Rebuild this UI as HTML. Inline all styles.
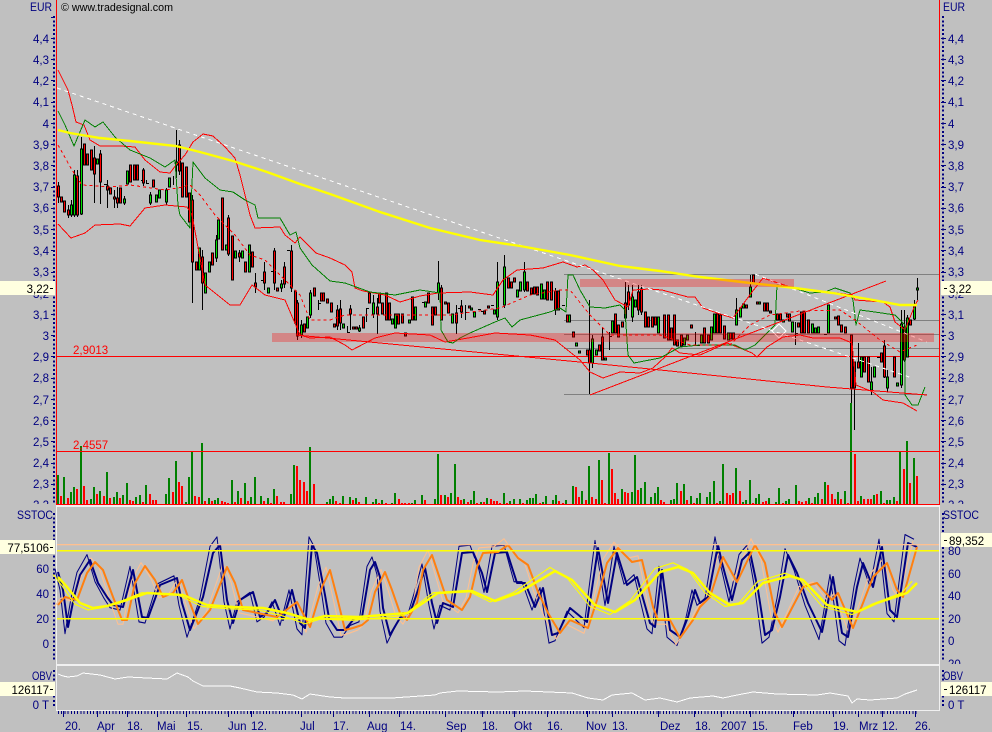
<!DOCTYPE html>
<html><head><meta charset="utf-8"><title>Chart</title>
<style>
html,body{margin:0;padding:0;background:#c0c0c0}
svg{display:block}
text{font-family:"Liberation Sans",sans-serif;font-size:11.5px;fill:#000080}
.r{text-anchor:end}
.k{fill:#000}
.rd{fill:#f00}
</style></head><body>
<svg width="992" height="732" viewBox="0 0 992 732" xmlns="http://www.w3.org/2000/svg">
<defs>
<clipPath id="cv"><rect x="0" y="0" width="992" height="504"/></clipPath>
<clipPath id="cs"><rect x="0" y="505" width="992" height="159"/></clipPath>
<path id="nv" fill="none" d="M58 572L63 590L68 627L74 597L80 575L90 560L98 583L107 597L113 605L123 607L133 570L142 617L148 618L160 585L177 578L182 603L190 630L203 597L213 553L220 545L227 600L233 623L240 600L253 592L260 617L267 613L275 600L283 620L292 590L300 623L305 628L312 545L317 553L325 595L329 618L337 630L345 630L353 620L362 617L370 570L375 562L380 577L383 608L390 635L397 623L403 613L410 613L417 593L425 568L432 603L437 623L443 603L453 607L462 553L473 552L482 573L487 592L495 553L507 552L517 583L525 583L535 607L543 588L552 635L558 633L570 608L587 622L598 548L608 603L617 553L627 585L637 577L650 623L655 627L662 570L670 630L680 637L688 617L695 590L700 603L708 597L718 545L722 563L732 600L742 560L750 552L758 590L765 635L772 630L780 597L788 555L797 573L808 603L822 632L833 577L842 633L848 637L857 587L863 563L873 587L882 547L890 610L897 617L908 543L917 547"/>
<path id="or" fill="none" d="M58 605L65 597L77 600L87 573L95 562L103 570L113 597L122 620L127 620L135 583L145 566L155 580L163 597L173 593L182 580L190 603L198 624L210 610L227 567L235 583L243 610L253 612L267 615L277 617L297 602L310 627L322 587L330 570L337 597L345 630L353 628L362 625L368 620L375 592L385 572L392 590L400 613L407 620L417 603L423 570L432 555L438 573L447 600L462 610L470 597L477 567L483 553L498 552L508 545L518 558L528 565L538 592L548 613L560 633L570 620L588 628L597 600L607 563L618 548L632 562L642 560L653 607L658 620L670 620L680 638L693 620L700 607L710 597L723 557L737 582L755 545L765 563L775 613L782 627L803 587L817 583L832 600L838 593L853 628L863 603L873 577L887 563L897 590L903 597L917 547"/>
<path id="yl" fill="none" d="M58 577L67 587L80 603L93 608L107 606L127 600L147 593L183 595L207 605L233 607L263 608L287 613L310 620L325 616L358 617L408 613L438 593L472 591L495 601L518 593L555 571L572 580L595 605L615 612L635 600L660 572L678 567L693 573L710 593L730 605L743 603L763 583L790 576L803 580L827 605L857 612L877 603L907 593L917 583"/>
</defs>

<rect width="992" height="732" fill="#c0c0c0"/>

<!-- volume -->
<g clip-path="url(#cv)" shape-rendering="crispEdges">
<path stroke="#008000" stroke-width="2.2" fill="none" d="M58 504V475M64 504V477M71 504V492M74 504V487M81 504V446M91 504V499M94 504V487M100 504V491M107 504V472M114 504V497M117 504V492M123 504V495M127 504V483M136 504V497M140 504V495M146 504V485M166 504V494M169 504V478M176 504V461M186 504V502M189 504V477M192 504V452M202 504V443M209 504V498M215 504V500M218 504V498M232 504V480M238 504V491M245 504V483M251 504V497M255 504V477M261 504V496M268 504V498M274 504V489M291 504V494M294 504V465M310 504V447M327 504V502M330 504V499M333 504V496M343 504V496M350 504V497M356 504V498M366 504V497M373 504V502M376 504V499M382 504V500M392 504V503M395 504V493M412 504V503M415 504V500M422 504V495M435 504V499M438 504V454M445 504V495M451 504V493M455 504V464M464 504V499M471 504V500M474 504V491M481 504V502M487 504V498M504 504V493M510 504V501M514 504V499M520 504V499M527 504V500M530 504V498M533 504V498M536 504V494M543 504V502M546 504V496M553 504V500M556 504V495M566 504V500M573 504V486M582 504V491M589 504V466M599 504V460M609 504V453M622 504V489M632 504V492M635 504V455M641 504V488M645 504V482M651 504V497M655 504V493M658 504V487M671 504V500M674 504V499M677 504V483M684 504V484M691 504V496M697 504V498M700 504V493M707 504V497M710 504V492M714 504V481M720 504V501M723 504V464M736 504V468M743 504V502M746 504V500M750 504V480M756 504V498M759 504V494M769 504V498M776 504V502M779 504V488M786 504V501M789 504V499M796 504V485M809 504V498M815 504V497M818 504V493M825 504V482M838 504V492M845 504V491M851 504V403M861 504V496M874 504V495M881 504V491M887 504V500M890 504V500M894 504V497M900 504V452M907 504V441M914 504V458"/>
<path stroke="#f00" stroke-width="2.2" fill="none" d="M61 504V496M68 504V498M77 504V489M84 504V486M87 504V500M97 504V494M104 504V496M110 504V498M120 504V498M130 504V500M133 504V501M143 504V502M150 504V494M153 504V500M156 504V500M173 504V492M179 504V482M182 504V486M195 504V496M199 504V497M205 504V501M212 504V501M222 504V501M225 504V502M228 504V503M235 504V502M241 504V498M248 504V501M264 504V501M271 504V503M277 504V496M281 504V502M284 504V502M297 504V466M300 504V480M304 504V482M307 504V491M314 504V484M336 504V501M340 504V503M353 504V500M359 504V502M379 504V503M386 504V503M399 504V499M402 504V503M405 504V503M409 504V503M425 504V500M441 504V495M448 504V497M458 504V497M461 504V500M468 504V502M477 504V503M484 504V502M491 504V499M494 504V501M497 504V501M500 504V503M507 504V503M523 504V503M540 504V503M559 504V501M563 504V503M576 504V487M579 504V497M586 504V500M592 504V497M596 504V499M602 504V480M605 504V503M612 504V469M615 504V493M618 504V499M625 504V492M628 504V493M638 504V490M661 504V500M664 504V502M681 504V491M687 504V500M694 504V503M717 504V503M727 504V493M730 504V495M733 504V493M740 504V491M753 504V503M763 504V502M766 504V501M783 504V503M799 504V501M802 504V502M806 504V501M812 504V503M822 504V499M828 504V485M832 504V494M835 504V499M841 504V499M848 504V503M855 504V454M858 504V501M864 504V499M868 504V499M871 504V499M877 504V494M884 504V503M897 504V501M904 504V469M910 504V483M917 504V476"/>
</g>

<!-- horizontal lines main -->
<g shape-rendering="crispEdges" fill="none">
<path stroke="#808080" d="M564 274.5H939M564 320.5H939M564 334.5H939M564 348.5H939M564 394.5H927"/>
<path stroke="#f00" d="M57 356.5H939M57 451.5H939"/>
</g>

<!-- candles -->
<g shape-rendering="crispEdges">
<path fill="none" stroke="#000" d="M58.5 182V203M68.5 205V218M71.5 200V217M74.5 170V217M77.5 170V217M81.5 137V215M94.5 146V203M100.5 150V204M107.5 180V208M114.5 190V208M117.5 187V208M124.5 196V205M143.5 168V186M146.5 180V184M150.5 192V205M166.5 188V205M173.5 176V185M176.5 130V178M179.5 140V175M192.5 195V303M202.5 250V310M216.5 235V262M228.5 215V256M239.5 250V262M255.5 273V293M264.5 262V290M274.5 248V290M281.5 280V292M284.5 262V288M291.5 245V292M297.5 300V340M301.5 320V338M310.5 290V318M318.5 300V310M337.5 305V330M340.5 300V330M347.5 326V332M350.5 305V330M359.5 325V332M366.5 308V322M373.5 295V318M377.5 298V334M438.5 261V300M441.5 285V320M456.5 305V334M461.5 300V318M465.5 305V320M497.5 262V320M504.5 255V308M524.5 262V292M555.5 288V315M589.5 300V394M592.5 335V368M602.5 328V360M609.5 332V350M625.5 282V322M628.5 285V310M632.5 285V322M638.5 285V315M641.5 285V315M695.5 332V345M736.5 298V325M750.5 275V297M795.5 322V345M851.5 335V403M854.5 362V430M858.5 343V368M871.5 367V395M884.5 340V378M887.5 370V392M901.5 310V388M904.5 310V362M907.5 315V357M914.5 300V320M917.5 278V300M104 184.5h3M141 180.5h3M146 183.5h3M261 280.5h3M271 271.5h3M287 250.5h3M318 303.5h3M347 332.5h3M366 308.5h3M422 302.5h3M458 308.5h3M465 312.5h3M478 309.5h3M481 311.5h3M491 305.5h3M562 305.5h3M609 336.5h3M694 345.5h3M697 345.5h3M795 333.5h3M824 334.5h3M877 357.5h3"/>
<path fill="#f00" stroke="#000" d="M57.5 186h2v11h-2zM60.5 197h2v5h-2zM63.5 201h2v11h-2zM67.5 210h2v5h-2zM76.5 176h2v39h-2zM83.5 144h2v21h-2zM86.5 154h2v11h-2zM90.5 150h2v20h-2zM93.5 158h2v16h-2zM99.5 154h2v28h-2zM106.5 186h2v4h-2zM109.5 188h2v6h-2zM113.5 197h2v2h-2zM116.5 198h2v5h-2zM119.5 188h2v15h-2zM129.5 165h2v17h-2zM133.5 165h2v15h-2zM136.5 165h2v15h-2zM142.5 170h2v13h-2zM152.5 180h2v7h-2zM178.5 145h2v26h-2zM181.5 163h2v34h-2zM185.5 167h2v30h-2zM188.5 193h2v29h-2zM191.5 200h2v62h-2zM195.5 262h2v8h-2zM201.5 257h2v26h-2zM211.5 253h2v12h-2zM221.5 198h2v52h-2zM227.5 218h2v36h-2zM231.5 236h2v44h-2zM238.5 253h2v4h-2zM244.5 262h2v10h-2zM251.5 252h2v15h-2zM254.5 283h2v4h-2zM263.5 272h2v11h-2zM273.5 251h2v32h-2zM276.5 288h2v3h-2zM283.5 267h2v17h-2zM290.5 251h2v37h-2zM294.5 291h2v32h-2zM296.5 303h2v33h-2zM303.5 324h2v8h-2zM313.5 288h2v8h-2zM320.5 293h2v8h-2zM322.5 293h2v8h-2zM326.5 299h2v4h-2zM330.5 303h2v9h-2zM333.5 324h2v3h-2zM336.5 310h2v16h-2zM339.5 309h2v14h-2zM349.5 309h2v5h-2zM352.5 327h2v2h-2zM355.5 327h2v2h-2zM362.5 317h2v11h-2zM368.5 293h2v10h-2zM376.5 307h2v7h-2zM378.5 293h2v10h-2zM381.5 303h2v11h-2zM385.5 293h2v27h-2zM388.5 303h2v17h-2zM397.5 314h2v10h-2zM401.5 314h2v9h-2zM404.5 333h2v3h-2zM411.5 297h2v23h-2zM427.5 293h2v10h-2zM431.5 307h2v18h-2zM434.5 307h2v8h-2zM440.5 288h2v32h-2zM444.5 302h2v2h-2zM447.5 303h2v10h-2zM455.5 313h2v10h-2zM460.5 306h2v6h-2zM468.5 306h2v2h-2zM483.5 311h2v3h-2zM487.5 306h2v2h-2zM507.5 278h2v10h-2zM510.5 282h2v6h-2zM513.5 278h2v4h-2zM526.5 282h2v9h-2zM530.5 288h2v6h-2zM533.5 287h2v7h-2zM536.5 287h2v8h-2zM546.5 282h2v18h-2zM550.5 282h2v18h-2zM554.5 291h2v19h-2zM557.5 291h2v19h-2zM566.5 315h2v7h-2zM572.5 332h2v5h-2zM586.5 350h2v5h-2zM588.5 350h2v13h-2zM598.5 345h2v6h-2zM601.5 337h2v23h-2zM614.5 314h2v19h-2zM617.5 325h2v12h-2zM621.5 322h2v5h-2zM624.5 303h2v15h-2zM627.5 292h2v13h-2zM637.5 292h2v18h-2zM640.5 289h2v23h-2zM644.5 312h2v15h-2zM647.5 317h2v10h-2zM651.5 317h2v10h-2zM654.5 317h2v8h-2zM663.5 315h2v23h-2zM667.5 315h2v25h-2zM670.5 328h2v12h-2zM673.5 315h2v30h-2zM676.5 340h2v6h-2zM680.5 335h2v11h-2zM690.5 325h2v3h-2zM703.5 328h2v15h-2zM707.5 335h2v8h-2zM716.5 314h2v19h-2zM719.5 315h2v18h-2zM723.5 326h2v13h-2zM729.5 333h2v6h-2zM732.5 333h2v6h-2zM745.5 305h2v3h-2zM752.5 275h2v8h-2zM756.5 302h2v2h-2zM763.5 303h2v8h-2zM766.5 303h2v8h-2zM769.5 311h2v2h-2zM776.5 314h2v6h-2zM779.5 314h2v6h-2zM786.5 314h2v3h-2zM788.5 314h2v7h-2zM797.5 323h2v4h-2zM800.5 312h2v21h-2zM803.5 312h2v21h-2zM807.5 320h2v13h-2zM834.5 317h2v2h-2zM837.5 316h2v9h-2zM840.5 325h2v7h-2zM844.5 327h2v6h-2zM850.5 335h2v53h-2zM853.5 362h2v26h-2zM857.5 362h2v6h-2zM863.5 357h2v15h-2zM867.5 357h2v25h-2zM880.5 353h2v9h-2zM883.5 346h2v31h-2zM893.5 357h2v20h-2zM903.5 327h2v33h-2zM909.5 320h2v5h-2z"/>
<path fill="#00e000" stroke="#000" d="M70.5 205h2v10h-2zM73.5 175h2v40h-2zM80.5 149h2v65h-2zM96.5 159h2v5h-2zM123.5 199h2v4h-2zM126.5 171h2v13h-2zM149.5 195h2v8h-2zM155.5 195h2v7h-2zM158.5 190h2v8h-2zM165.5 190h2v12h-2zM168.5 178h2v9h-2zM175.5 162h2v3h-2zM198.5 248h2v22h-2zM204.5 273h2v20h-2zM208.5 262h2v10h-2zM215.5 240h2v18h-2zM217.5 220h2v19h-2zM225.5 245h2v5h-2zM234.5 251h2v7h-2zM241.5 251h2v7h-2zM248.5 245h2v27h-2zM267.5 288h2v5h-2zM280.5 284h2v4h-2zM300.5 325h2v10h-2zM306.5 317h2v11h-2zM309.5 293h2v22h-2zM342.5 324h2v4h-2zM358.5 328h2v3h-2zM372.5 303h2v11h-2zM391.5 319h2v5h-2zM394.5 314h2v14h-2zM408.5 320h2v3h-2zM414.5 307h2v13h-2zM424.5 302h2v5h-2zM437.5 283h2v10h-2zM451.5 314h2v9h-2zM470.5 308h2v2h-2zM473.5 312h2v5h-2zM493.5 310h2v4h-2zM496.5 282h2v35h-2zM503.5 267h2v38h-2zM516.5 290h2v7h-2zM519.5 282h2v9h-2zM523.5 272h2v18h-2zM540.5 284h2v15h-2zM543.5 290h2v9h-2zM568.5 315h2v7h-2zM575.5 343h2v3h-2zM578.5 351h2v2h-2zM591.5 339h2v24h-2zM595.5 350h2v5h-2zM604.5 358h2v2h-2zM611.5 321h2v12h-2zM631.5 297h2v20h-2zM634.5 300h2v7h-2zM657.5 317h2v16h-2zM683.5 338h2v7h-2zM686.5 335h2v5h-2zM700.5 335h2v8h-2zM710.5 327h2v13h-2zM713.5 314h2v19h-2zM727.5 333h2v7h-2zM735.5 310h2v15h-2zM739.5 308h2v9h-2zM742.5 304h2v4h-2zM749.5 287h2v10h-2zM758.5 302h2v2h-2zM782.5 320h2v2h-2zM791.5 322h2v10h-2zM811.5 324h2v9h-2zM814.5 328h2v5h-2zM817.5 327h2v6h-2zM827.5 305h2v28h-2zM860.5 357h2v20h-2zM870.5 382h2v8h-2zM873.5 367h2v10h-2zM886.5 377h2v11h-2zM896.5 383h2v3h-2zM900.5 324h2v61h-2zM906.5 318h2v39h-2zM913.5 307h2v12h-2zM916.5 288h2v2h-2z"/>
</g>

<!-- overlays main -->
<g fill="none" shape-rendering="crispEdges" stroke-linejoin="round">
<path stroke="#f00" d="M58 70L62 78L68 90L72 105L76 122L84 125L90 140L100 146L120 146L135 147L145 160L160 172L170 173L176 165L185 155L193 142L203 134L213 136L225 147L235 158L240 175L250 215L255 228L280 227L285 235L295 243L300 237L316 253L330 258L345 265L352 272L355 288L363 291L385 295L400 302L420 296L438 293L470 292L493 295L503 280L517 270L543 268L563 262L577 267L585 265L593 270L603 280L615 300L628 307L633 290L650 289L662 290L688 297L695 297L703 308L717 313L733 318L752 292L763 278L793 288L813 290L852 295L855 300L883 302L890 307L895 322L905 330L915 305L918 300"/>
<path stroke="#f00" d="M58 224L71 238L85 233L95 225L120 224L130 226L145 208L165 205L187 207L192 215L205 285L215 293L230 305L240 305L252 285L265 295L285 300L300 335L310 338L330 337L345 345L352 350L375 338L395 333L430 335L445 342L468 338L495 333L530 335L555 340L580 360L590 372L603 378L620 372L640 373L653 368L665 357L672 348L680 353L700 355L727 343L740 348L752 353L757 357L767 347L783 337L800 335L813 338L840 338L852 343L856 385L873 392L883 400L903 403L917 411"/>
<path stroke="#008000" d="M58 111L65 125L74 146L85 120L95 127L103 122L115 137L130 150L150 158L165 167L175 160L178 205L180 215L190 228L193 162L205 178L220 190L233 192L245 200L255 205L258 218L280 218L290 235L296 232L300 248L312 265L330 281L345 283L370 292L395 295L420 290L440 293L441 330L448 342L453 343L460 338L470 333L495 322L505 318L512 327L520 320L550 312L560 308L566 312L568 275L573 275L580 290L590 307L605 308L620 305L625 310L628 355L634 363L660 358L680 347L700 345L720 345L735 345L745 350L755 345L765 335L775 325L777 285L790 287L810 293L825 292L835 288L850 293L853 300L856 325L860 310L875 312L895 315L905 325L905 395L912 405L918 405L920 400L925 387"/>
<path stroke="#f00" stroke-dasharray="3 3" d="M58 145L72 170L82 185L110 187L130 185L165 190L178 188L190 185L200 195L215 215L235 235L250 255L265 260L300 295L310 320L330 320L345 315L400 315L450 315L500 308L530 295L560 290L570 290L590 315L610 335L640 335L660 335L690 345L730 345L750 325L770 315L800 311L840 310L855 320L880 340L900 352L917 345"/>
<path stroke="#f00" d="M296 335L590 363L660 370L827 387L927 395M590 395L886 281"/>
<path stroke="#fff" stroke-dasharray="4 4" d="M57 88L912 378M755 274L927 342"/>
<path stroke="#fff" d="M779 324L786 331L779 338L772 331Z"/>
</g>
<polyline fill="none" stroke="#ffff00" stroke-width="2.4" points="58,130 70,133 100,138 130,141 176,146 200,152 233,161 267,172 300,184 330,194 380,212 430,228 480,240 520,246 570,255 620,266 660,271 700,277 750,283 787,287 833,293 873,300 900,305 917,305"/>
<rect x="272" y="333" width="662" height="9" fill="rgba(255,0,0,.3)"/>
<rect x="580" y="279" width="214" height="8" fill="rgba(255,0,0,.3)"/>

<!-- frames -->
<g shape-rendering="crispEdges" fill="none">
<path stroke="#f00" d="M56.5 0V504M939.5 0V504M56 504.5H940"/>
<path stroke="#f0f0f0" d="M56.5 505V710M939.5 505V710M56 710.5H940"/>
<path stroke="#f0f0f0" stroke-width="2" d="M0 506H992M0 665H992"/>
</g>
<rect x="0" y="505" width="56" height="2" fill="#c0c0c0"/>
<rect x="940" y="505" width="52" height="2" fill="#c0c0c0"/>
<rect x="0" y="664" width="56" height="2" fill="#c0c0c0"/>
<rect x="940" y="664" width="52" height="2" fill="#c0c0c0"/>

<!-- stochastic -->
<g fill="none" stroke-linejoin="round">
<use href="#nv" stroke="#000080" stroke-width="1" transform="translate(-3 0) translate(0 590) scale(1 1.18) translate(0 -590)"/>
<use href="#or" stroke="#ffc090" stroke-width="1" transform="translate(-4 0) translate(0 590) scale(1 1.14) translate(0 -590)"/>
<use href="#nv" stroke="#000080" stroke-width="2"/>
<use href="#or" stroke="#ff8010" stroke-width="2"/>
<rect x="57" y="544" width="882" height="1.3" fill="#ffc090" stroke="none"/>
<use href="#yl" stroke="#ffff00" stroke-width="1" transform="translate(-5 0) translate(0 595) scale(1 1.15) translate(0 -595)"/>
<use href="#yl" stroke="#ffff00" stroke-width="2.5"/>
<rect x="57" y="550" width="882" height="1.5" fill="#ffff00" stroke="none"/>
<rect x="57" y="618" width="882" height="1.5" fill="#ffff00" stroke="none"/>
</g>

<!-- OBV -->
<polyline fill="none" stroke="#fff" shape-rendering="crispEdges" points="58,674 63,676 68,677 77,676 83,673 100,675 115,679 128,677 147,678 167,679 177,673 188,677 193,681 203,686 230,686 240,688 257,692 277,693 293,695 302,699 310,694 330,697 345,698 392,698 435,695 440,693 458,691 498,692 525,691 572,693 588,698 603,700 612,695 632,693 645,700 660,698 677,702 690,698 713,696 723,698 737,695 753,692 777,694 817,695 830,693 848,696 852,703 857,699 870,700 897,698 905,694 917,690"/>

<!-- axis ticks -->
<g fill="none" stroke="#000080" shape-rendering="crispEdges">
<path stroke-width="2" stroke-dasharray="2 2.25" d="M54 16V504M54 513V660M54 670V708M943 16V504M943 513V660M943 670V708"/>
<path d="M51 17.5H55M51 38.5H55M51 59.5H55M51 80.5H55M51 102.5H55M51 123.5H55M51 144.5H55M51 165.5H55M51 187.5H55M51 208.5H55M51 229.5H55M51 250.5H55M51 272.5H55M51 293.5H55M51 314.5H55M51 335.5H55M51 356.5H55M51 378.5H55M51 399.5H55M51 420.5H55M51 441.5H55M51 463.5H55M51 484.5H55M941 38.5H946M941 59.5H946M941 80.5H946M941 102.5H946M941 123.5H946M941 144.5H946M941 165.5H946M941 187.5H946M941 208.5H946M941 229.5H946M941 250.5H946M941 272.5H946M941 293.5H946M941 314.5H946M941 335.5H946M941 356.5H946M941 378.5H946M941 399.5H946M941 420.5H946M941 441.5H946M941 463.5H946M941 484.5H946"/>
<path stroke-width="3" stroke-dasharray="1 2.2" d="M58 712.5H918"/>
<path d="M63.5 711V717M97.5 711V717M127.5 711V717M157.5 711V717M186.5 711V717M228.5 711V717M251.5 711V717M301.5 711V717M333.5 711V717M369.5 711V717M399.5 711V717M445.5 711V717M482.5 711V717M514.5 711V717M547.5 711V717M587.5 711V717M612.5 711V717M658.5 711V717M694.5 711V717M721.5 711V717M750.5 711V717M793.5 711V717M833.5 711V717M858.5 711V717M882.5 711V717M915.5 711V717"/>
</g>

<!-- labels hidden partly behind boxes -->
<text class="r" x="49" y="298">3,2</text>
<text x="948" y="298">3,2</text>

<!-- label boxes -->
<g fill="#ffffe0">
<rect x="0" y="281" width="55" height="14"/><rect x="941" y="281" width="51" height="14"/>
<rect x="0" y="540" width="55" height="14"/><rect x="941" y="533" width="51" height="14"/>
<rect x="0" y="682" width="55" height="14"/><rect x="941" y="682" width="51" height="14"/>
</g>
<path d="M50 288.5h3M50 547.5h3M50 689.5h3M944 288.5h3M944 540.5h3M944 689.5h3" stroke="#000" fill="none" shape-rendering="crispEdges"/>

<!-- text -->
<text x="30" y="11" textLength="22" lengthAdjust="spacingAndGlyphs">EUR</text>
<text x="943" y="11" textLength="22" lengthAdjust="spacingAndGlyphs">EUR</text>
<text class="k" x="61" y="11" style="font-size:10.8px" textLength="112" lengthAdjust="spacingAndGlyphs">© www.tradesignal.com</text>
<g class="r">
<text x="49" y="43">4,4</text><text x="49" y="64">4,3</text><text x="49" y="85">4,2</text><text x="49" y="106">4,1</text><text x="49" y="128">4</text><text x="49" y="149">3,9</text><text x="49" y="170">3,8</text><text x="49" y="191">3,7</text><text x="49" y="212">3,6</text><text x="49" y="234">3,5</text><text x="49" y="255">3,4</text><text x="49" y="276">3,3</text><text x="49" y="319">3,1</text><text x="49" y="340">3</text><text x="49" y="361">2,9</text><text x="49" y="382">2,8</text><text x="49" y="404">2,7</text><text x="49" y="425">2,6</text><text x="49" y="446">2,5</text><text x="49" y="467">2,4</text><text x="49" y="488">2,3</text>
<text x="49" y="509" clip-path="url(#cv)">2,2</text>
<text x="49" y="573">60</text><text x="49" y="598">40</text><text x="49" y="623">20</text><text x="49" y="648">0</text>
<text class="k" x="49" y="293">3,22</text><text class="k" x="49" y="552">77,5106</text><text class="k" x="49" y="694">126117</text>
<text x="49" y="709">0 T</text>
</g>
<text x="17" y="519" textLength="36" lengthAdjust="spacingAndGlyphs">SSTOC</text><text x="32" y="680" textLength="20" lengthAdjust="spacingAndGlyphs">OBV</text>
<g>
<text x="948" y="43">4,4</text><text x="948" y="64">4,3</text><text x="948" y="85">4,2</text><text x="948" y="106">4,1</text><text x="948" y="128">4</text><text x="948" y="149">3,9</text><text x="948" y="170">3,8</text><text x="948" y="191">3,7</text><text x="948" y="212">3,6</text><text x="948" y="234">3,5</text><text x="948" y="255">3,4</text><text x="948" y="276">3,3</text><text x="948" y="319">3,1</text><text x="948" y="340">3</text><text x="948" y="361">2,9</text><text x="948" y="382">2,8</text><text x="948" y="404">2,7</text><text x="948" y="425">2,6</text><text x="948" y="446">2,5</text><text x="948" y="467">2,4</text><text x="948" y="488">2,3</text>
<text x="948" y="509" clip-path="url(#cv)">2,2</text>
<text x="943" y="519" textLength="36" lengthAdjust="spacingAndGlyphs">SSTOC</text>
<text x="948" y="555">80</text><text x="948" y="578">60</text><text x="948" y="600">40</text><text x="948" y="623">20</text><text x="948" y="645">0</text>
<text x="948" y="668" clip-path="url(#cs)">20</text>
<text x="943" y="680" textLength="20" lengthAdjust="spacingAndGlyphs">OBV</text><text x="948" y="709">0 T</text>
<text class="k" x="949" y="293">3,22</text><text class="k" x="949" y="545">89,352</text><text class="k" x="949" y="694">126117</text>
</g>
<text class="rd" x="73" y="354">2,9013</text>
<text class="rd" x="73" y="449">2,4557</text>
<g>
<text x="65" y="730">20.</text><text x="97" y="730">Apr</text><text x="127" y="730">18.</text><text x="157" y="730">Mai</text><text x="187" y="730">15.</text><text x="228" y="730">Jun</text><text x="251" y="730">12.</text><text x="300" y="730">Jul</text><text x="333" y="730">17.</text><text x="367" y="730">Aug</text><text x="400" y="730">14.</text><text x="446" y="730">Sep</text><text x="482" y="730">18.</text><text x="514" y="730">Okt</text><text x="547" y="730">16.</text><text x="586" y="730">Nov</text><text x="612" y="730">13.</text><text x="660" y="730">Dez</text><text x="695" y="730">18.</text><text x="721" y="730">2007</text><text x="752" y="730">15.</text><text x="793" y="730">Feb</text><text x="833" y="730">19.</text><text x="859" y="730">Mrz</text><text x="882" y="730">12.</text><text x="915" y="730">26.</text>
</g>
</svg>
</body></html>
